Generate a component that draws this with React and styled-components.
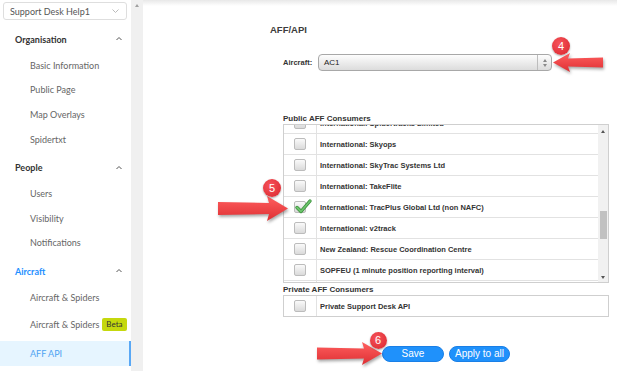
import React from "react";
import styled, { createGlobalStyle } from "styled-components";

const GlobalStyle = createGlobalStyle`
	html, body {
		margin: 0;
		padding: 0;
		background: #fff;
		overflow: hidden;
	}
`;

const Page = styled.div`
	position: relative;
	display: flex;
	width: 617px;
	height: 371px;
	overflow: hidden;
	background: #fff;
`;

/* ---------- sidebar ---------- */

const Sidebar = styled.nav`
	width: 131px;
	flex: none;
	display: flex;
	flex-direction: column;
	font-family: Lato, "Open Sans", sans-serif;
	font-size: 9px;
`;

const OrgSelect = styled.div`
	box-sizing: border-box;
	margin: 2px 0 0 3px;
	width: 124px;
	height: 18px;
	border: 1px solid #dedede;
	border-radius: 3px;
	display: flex;
	align-items: center;
	justify-content: space-between;
	padding: 0 7px 0 6px;
	color: #555;
`;

const SectionHeader = styled.div`
	height: 28px;
	margin-top: ${p => (p.$first ? "5px" : "2px")};
	display: flex;
	align-items: center;
	justify-content: space-between;
	padding: 0 9px 0 15px;
	font-weight: 700;
	color: ${p => (p.$active ? "#1e8fff" : "#333")};
`;

const NavItem = styled.div`
	height: ${p => p.$h || 24.6}px;
	display: flex;
	align-items: center;
	gap: 3px;
	padding-left: 30px;
	color: #666;
	${p =>
		p.$active &&
		`
		margin-top: 2px;
		background: #e6f5ff;
		color: #4ea3f2;
		box-shadow: inset -2px 0 #5aa8f5;
	`}
`;

const BetaTag = styled.span`
	background: #c5d80d;
	color: #333;
	font-size: 8px;
	line-height: 13px;
	padding: 0 4px;
	border-radius: 2px;
`;

const SideScroll = styled.div`
	width: 12px;
	flex: none;
	background: #f0f0f0;
	display: flex;
	justify-content: center;
	padding-top: 4px;
	box-sizing: border-box;
`;

const TinyTri = styled.span`
	width: 0;
	height: 0;
	border-left: 2.5px solid transparent;
	border-right: 2.5px solid transparent;
	${p =>
		p.$down
			? `border-top: 3px solid ${p.$color || "#999"};`
			: `border-bottom: 3px solid ${p.$color || "#999"};`}
`;

/* ---------- main ---------- */

const Main = styled.main`
	flex: 1;
	background: linear-gradient(#e8e8e8, #fff 6px);
	padding: 22px 0 0 127px;
	font-family: "Liberation Sans", Arial, sans-serif;
	color: #333;
`;

const Title = styled.h2`
	margin: 0;
	font-size: 9.5px;
	line-height: 16px;
	font-weight: 700;
	color: #3c3c3c;
`;

const Form = styled.div`
	width: 326px;
	margin-left: 13px;
`;

const FieldRow = styled.div`
	margin-top: 16px;
	display: flex;
	align-items: center;
	height: 17px;
`;

const FieldLabel = styled.label`
	width: 35px;
	font-size: 7.5px;
	font-weight: 700;
`;

const SelectBox = styled.div`
	box-sizing: border-box;
	width: 234px;
	height: 17px;
	border: 1px solid #a8a8a8;
	border-radius: 4px;
	background: linear-gradient(#fdfdfd, #dcdcdc);
	display: flex;
	align-items: center;
	font-size: 8px;
	color: #222;
`;

const SelectText = styled.span`
	flex: 1;
	padding-left: 5px;
`;

const Spinner = styled.span`
	width: 13px;
	height: 100%;
	border-left: 1px solid #bdbdbd;
	display: flex;
	flex-direction: column;
	align-items: center;
	justify-content: center;
	gap: 2px;
`;

const ListLabel = styled.div`
	margin-top: ${p => p.$gap}px;
	font-size: 8px;
	line-height: 11px;
	font-weight: 700;
	color: #333;
`;

const ListBox = styled.div`
	box-sizing: border-box;
	height: ${p => p.$h}px;
	border: 1px solid #cfcfcf;
	display: flex;
	overflow: hidden;
`;

const Viewport = styled.div`
	flex: 1;
	overflow: hidden;
`;

const Rows = styled.div`
	margin-top: ${p => p.$offset || 0}px;
`;

const Row = styled.div`
	box-sizing: border-box;
	height: ${p => p.$h || 21}px;
	display: flex;
	border-bottom: ${p => (p.$last ? "none" : "1px solid #e2e2e2")};
`;

const CheckCell = styled.div`
	width: 32px;
	flex: none;
	border-right: 1px solid #e2e2e2;
	display: flex;
	align-items: center;
	justify-content: center;
`;

const RowText = styled.div`
	display: flex;
	align-items: center;
	padding-left: 3px;
	font-size: 7.5px;
	font-weight: 700;
	color: #333;
	white-space: nowrap;
`;

const Box = styled.span`
	position: relative;
	box-sizing: border-box;
	width: 12px;
	height: 12px;
	border: 1px solid #bcbcbc;
	border-radius: 2px;
	background: linear-gradient(#fafafa, #dadada);
`;

const CheckMark = styled.svg`
	position: absolute;
	left: 0;
	top: -3px;
	overflow: visible;
`;

const ScrollTrack = styled.div`
	width: 10px;
	flex: none;
	background: #f1f1f1;
	display: flex;
	flex-direction: column;
	align-items: center;
	justify-content: space-between;
	padding: 5px 0 3px;
	box-sizing: border-box;
`;

const Thumb = styled.div`
	width: 7px;
	height: 28px;
	background: #c1c1c1;
	margin-top: 78px;
	margin-bottom: auto;
`;

const ButtonRow = styled.div`
	margin-top: 29px;
	display: flex;
	justify-content: center;
	gap: 5px;
`;

const Button = styled.button`
	box-sizing: border-box;
	width: ${p => p.$w}px;
	height: 16px;
	padding: 0;
	border: 1px solid #1a7fe6;
	border-radius: 8px;
	background: #1f91fb;
	color: #fff;
	font-family: "Liberation Sans", Arial, sans-serif;
	font-size: 10px;
	line-height: 14px;
`;

/* ---------- annotations (overlay) ---------- */

const Badge = styled.span`
	position: absolute;
	left: ${p => p.$x - p.$s / 2}px;
	top: ${p => p.$y - p.$s / 2}px;
	width: ${p => p.$s}px;
	height: ${p => p.$s}px;
	border-radius: 50%;
	background: radial-gradient(circle at 40% 35%, #f6535a, #d9252c);
	box-shadow: 0 1px 2px rgba(0, 0, 0, 0.35);
	color: #fff;
	font-family: "Liberation Sans", Arial, sans-serif;
	font-size: 11px;
	line-height: ${p => p.$s}px;
	text-align: center;
`;

const ArrowSvg = styled.svg`
	position: absolute;
	left: ${p => p.$left}px;
	top: ${p => p.$top}px;
	overflow: visible;
	filter: drop-shadow(1px 2px 1.5px rgba(0, 0, 0, 0.35));
`;

const Arrow = ({ id, tipX, tipY, length, headLen, headH, shaft, dir }) => {
	const H = headH;
	const m = H / 2;
	const t = shaft / 2;
	// polygon drawn pointing left, tip at (0, m)
	const pts = [
		[0, m],
		[headLen, 0],
		[headLen - 2, m - t],
		[length, m - t - 1],
		[length, m + t + 1],
		[headLen - 2, m + t],
		[headLen, H],
	];
	const left = dir === "left" ? tipX : tipX - length;
	const points = pts
		.map(([x, y]) => `${dir === "left" ? x : length - x},${y}`)
		.join(" ");
	return (
		<ArrowSvg $left={left} $top={tipY - m} width={length} height={H}>
			<defs>
				<linearGradient id={id} x1="0" y1="0" x2="0" y2="1">
					<stop offset="0" stopColor="#ff5f5f" />
					<stop offset="1" stopColor="#de2f33" />
				</linearGradient>
			</defs>
			<polygon points={points} fill={`url(#${id})`} />
		</ArrowSvg>
	);
};

const Chevron = ({ up, w = 6, h = 3.5, color = "#555" }) => (
	<svg width={w} height={h} viewBox={`0 0 ${w} ${h}`}>
		<polyline
			points={up ? `0.5,${h - 0.5} ${w / 2},0.5 ${w - 0.5},${h - 0.5}` : `0.5,0.5 ${w / 2},${h - 0.5} ${w - 0.5},0.5`}
			fill="none"
			stroke={color}
			strokeWidth="1"
		/>
	</svg>
);

const Checkbox = ({ checked }) => (
	<Box>
		{checked && (
			<CheckMark width="16" height="14" viewBox="0 0 16 14">
				<path d="M2 8.5 L6 12.5 L15 2" fill="none" stroke="#3b8f3b" strokeWidth="3.4" strokeLinecap="round" strokeLinejoin="round" />
				<path d="M2 8.5 L6 12.5 L15 2" fill="none" stroke="#6cc46c" strokeWidth="1.8" strokeLinecap="round" strokeLinejoin="round" />
			</CheckMark>
		)}
	</Box>
);

const publicConsumers = [
	{ name: "International: Spidertracks Limited" },
	{ name: "International: Skyops" },
	{ name: "International: SkyTrac Systems Ltd" },
	{ name: "International: TakeFlite" },
	{ name: "International: TracPlus Global Ltd (non NAFC)", checked: true },
	{ name: "International: v2track" },
	{ name: "New Zealand: Rescue Coordination Centre" },
	{ name: "SOPFEU (1 minute position reporting interval)" },
	{ name: "" },
];

const navSections = [
	{ title: "Organisation", items: ["Basic Information", "Public Page", "Map Overlays", "Spidertxt"] },
	{ title: "People", items: ["Users", "Visibility", "Notifications"] },
];

export default function App() {
	return (
		<Page>
			<GlobalStyle />
			<Sidebar>
				<OrgSelect>
					<span>Support Desk Help1</span>
					<Chevron w={7} h={4} color="#bbb" />
				</OrgSelect>
				{navSections.map((section, i) => (
					<React.Fragment key={section.title}>
						<SectionHeader $first={i === 0}>
							{section.title}
							<Chevron up />
						</SectionHeader>
						{section.items.map(item => (
							<NavItem key={item}>{item}</NavItem>
						))}
					</React.Fragment>
				))}
				<SectionHeader $active>
					Aircraft
					<Chevron up />
				</SectionHeader>
				<NavItem>Aircraft &amp; Spiders</NavItem>
				<NavItem $h={29}>
					Aircraft &amp; Spiders <BetaTag>Beta</BetaTag>
				</NavItem>
				<NavItem $active $h={25}>AFF API</NavItem>
			</Sidebar>
			<SideScroll>
				<TinyTri $color="#a0a0a0" />
			</SideScroll>
			<Main>
				<Title>AFF/API</Title>
				<Form>
					<FieldRow>
						<FieldLabel>Aircraft:</FieldLabel>
						<SelectBox>
							<SelectText>AC1</SelectText>
							<Spinner>
								<TinyTri $color="#8a8a8a" />
								<TinyTri $down $color="#8a8a8a" />
							</Spinner>
						</SelectBox>
					</FieldRow>

					<ListLabel $gap={42}>Public AFF Consumers</ListLabel>
					<ListBox $h={159}>
						<Viewport>
							<Rows $offset={-12}>
								{publicConsumers.map((c, i) => (
									<Row key={i}>
										<CheckCell>
											<Checkbox checked={c.checked} />
										</CheckCell>
										<RowText>{c.name}</RowText>
									</Row>
								))}
							</Rows>
						</Viewport>
						<ScrollTrack>
							<TinyTri $color="#555" />
							<Thumb />
							<TinyTri $down $color="#555" />
						</ScrollTrack>
					</ListBox>

					<ListLabel $gap={1}>Private AFF Consumers</ListLabel>
					<ListBox $h={22}>
						<Viewport>
							<Row $h={20} $last>
								<CheckCell>
									<Checkbox />
								</CheckCell>
								<RowText>Private Support Desk API</RowText>
							</Row>
						</Viewport>
					</ListBox>

					<ButtonRow>
						<Button $w={62}>Save</Button>
						<Button $w={61}>Apply to all</Button>
					</ButtonRow>
				</Form>
			</Main>

			<Arrow id="a4" dir="left" tipX={553} tipY={62} length={50} headLen={17} headH={19} shaft={8} />
			<Badge $x={561} $y={46} $s={18}>4</Badge>
			<Arrow id="a5" dir="right" tipX={288} tipY={208} length={70} headLen={21} headH={25} shaft={11} />
			<Badge $x={272} $y={188} $s={18}>5</Badge>
			<Arrow id="a6" dir="right" tipX={382} tipY={353} length={65} headLen={20} headH={23} shaft={10} />
			<Badge $x={378} $y={340} $s={17}>6</Badge>
		</Page>
	);
}
